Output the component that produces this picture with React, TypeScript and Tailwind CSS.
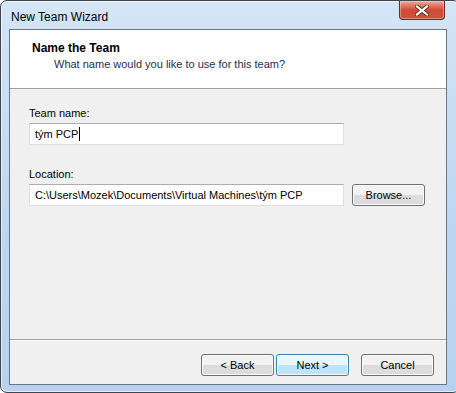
const FONT = { fontFamily: '"Liberation Sans", Arial, sans-serif' };

function WinButton({ label, primary = false, className = "" }: { label: string; primary?: boolean; className?: string }) {
  return (
    <div
      className={`flex h-[22px] items-center justify-center rounded-[3px] border text-[11px] text-black ${
        primary
          ? "border-[#3c7fb1] bg-gradient-to-b from-[#eaf6fd] from-50% to-[#bfe4f9] to-50% shadow-[inset_0_0_0_1px_#f4fbff]"
          : "border-[#707070] bg-gradient-to-b from-[#f2f2f2] from-50% to-[#dcdcdc] to-50% shadow-[inset_0_0_0_1px_#fbfbfb]"
      } ${className}`}
    >
      {label}
    </div>
  );
}

function TextBox({ value, caret = false }: { value: string; caret?: boolean }) {
  return (
    <div className="flex h-[22px] w-[315px] items-center border border-[#dbdfe6] border-t-[#abadb3] bg-white pl-[5px] text-[11px] text-black">
      <span>{value}</span>
      {caret && <span className="ml-[1px] h-[14px] w-px bg-black" />}
    </div>
  );
}

function CloseButton() {
  return (
    <div className="flex h-[19px] w-[46px] items-center justify-center rounded-b-[4px] border border-t-0 border-[#6d2a22] bg-gradient-to-b from-[#e9a99c] via-[#d24a33] to-[#c7553f] shadow-[inset_0_0_0_1px_rgba(255,255,255,0.35)]">
      <svg width="14" height="11" viewBox="0 0 14 11">
        <path d="M2 1.5 L12 9.5 M12 1.5 L2 9.5" stroke="#5a2a22" strokeWidth="4" strokeLinecap="square" />
        <path d="M2 1.5 L12 9.5 M12 1.5 L2 9.5" stroke="#ffffff" strokeWidth="2.2" strokeLinecap="square" />
      </svg>
    </div>
  );
}

export default function App() {
  return (
    <div className="h-[393px] w-[456px] overflow-hidden bg-white" style={FONT}>
      <div className="flex h-[393px] w-[460px] flex-col rounded-t-[7px] rounded-b-[7px] border border-[#3d4650] bg-gradient-to-b from-[#d4e5f6] via-[#c0d8f1] to-[#b7d2ef] shadow-[inset_0_0_0_1px_rgba(255,255,255,0.6)]">
        <div className="flex h-[28px] shrink-0 items-start justify-between">
          <span className="ml-[10px] mt-[7px] text-[12px] text-black">New Team Wizard</span>
          <div className="mr-[14px]">
            <CloseButton />
          </div>
        </div>

        <div className="ml-[8px] flex h-[356px] w-[438px] flex-col border border-[#6a7685] bg-[#f0f0f0]">
          <div className="flex h-[59px] shrink-0 flex-col border-b border-[#a0a0a0] bg-white pl-[22px] pt-[11px]">
            <span className="text-[12px] font-bold leading-[14px] text-black">Name the Team</span>
            <span className="ml-[22px] mt-[2px] text-[11px] leading-[14px] text-[#1e2f4f]">
              What name would you like to use for this team?
            </span>
          </div>

          <div className="flex flex-1 flex-col pl-[19px] pt-[17px]">
            <span className="text-[11px] leading-[14px] text-black">Team name:</span>
            <div className="mt-[3px]">
              <TextBox value="tým PCP" caret />
            </div>
            <span className="mt-[22px] text-[11px] leading-[14px] text-black">Location:</span>
            <div className="mt-[3px] flex items-center gap-[8px]">
              <TextBox value="C:\Users\Mozek\Documents\Virtual Machines\tým PCP" />
              <WinButton label="Browse..." className="h-[21px] w-[73px]" />
            </div>
          </div>

          <div className="flex h-[45px] shrink-0 items-start border-t border-[#a0a0a0] pt-[14px] shadow-[inset_0_1px_0_#ffffff]">
            <WinButton label="< Back" className="ml-[191px] w-[73px]" />
            <WinButton label="Next >" primary className="ml-[2px] w-[73px]" />
            <WinButton label="Cancel" className="ml-[12px] w-[73px]" />
          </div>
        </div>
      </div>
    </div>
  );
}
